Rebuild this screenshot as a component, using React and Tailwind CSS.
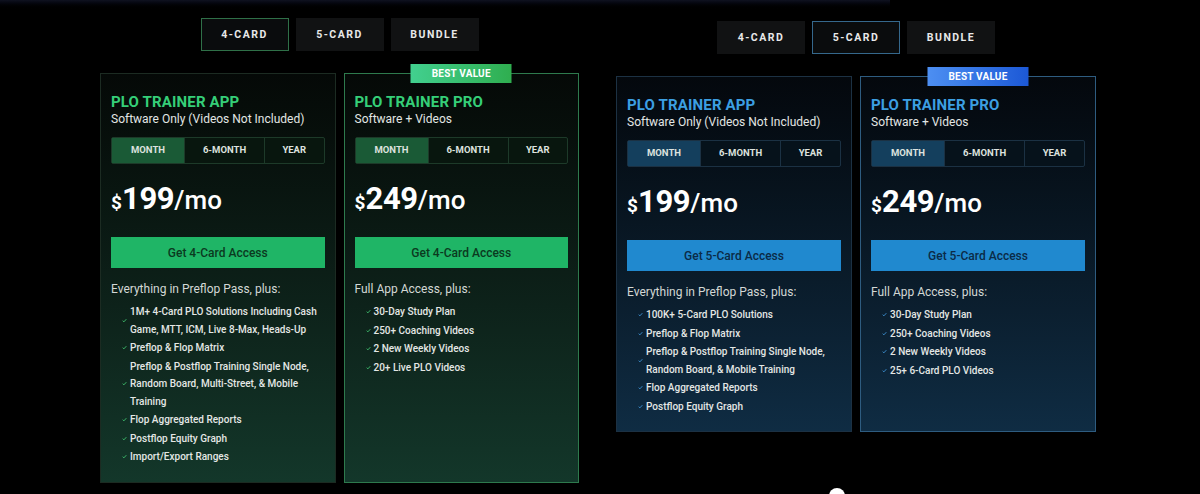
import React from "react";

const themes = {
  green: {
    tabActive: "border-[#2f7048]",
    title: "text-[#35cf78]",
    toggleWrap: "border-[#1d3a29] bg-[#08160e]",
    toggleActive: "bg-[#1a5a36]",
    toggleLine: "border-[#1d3a29]",
    button: "bg-[#1fb566] text-[#0b3a1f]",
    check: "#3fbf6f",
    card: "from-[#050907] to-[#13372a]",
    cardBorder: "border-[#1c2b22]",
    proBorder: "border-[#2e7a4d]",
    badge: "from-[#42d08f] to-[#2fae4f]",
    cta: "Get 4-Card Access",
    appFeatures: [
      "1M+ 4-Card PLO Solutions Including Cash Game, MTT, ICM, Live 8-Max, Heads-Up",
      "Preflop & Flop Matrix",
      "Preflop & Postflop Training Single Node, Random Board, Multi-Street, & Mobile Training",
      "Flop Aggregated Reports",
      "Postflop Equity Graph",
      "Import/Export Ranges",
    ],
    proFeatures: ["30-Day Study Plan", "250+ Coaching Videos", "2 New Weekly Videos", "20+ Live PLO Videos"],
    active: 0,
  },
  blue: {
    tabActive: "border-[#35688c]",
    title: "text-[#3c9fe2]",
    toggleWrap: "border-[#1b3143] bg-[#06121b]",
    toggleActive: "bg-[#143f5d]",
    toggleLine: "border-[#1b3143]",
    button: "bg-[#2089cf] text-[#0b2b47]",
    check: "#3d90d2",
    card: "from-[#04080d] to-[#0f2c43]",
    cardBorder: "border-[#1c3143]",
    proBorder: "border-[#2e5c80]",
    badge: "from-[#4d8ff2] to-[#1c58d6]",
    cta: "Get 5-Card Access",
    appFeatures: [
      "100K+ 5-Card PLO Solutions",
      "Preflop & Flop Matrix",
      "Preflop & Postflop Training Single Node, Random Board, & Mobile Training",
      "Flop Aggregated Reports",
      "Postflop Equity Graph",
    ],
    proFeatures: ["30-Day Study Plan", "250+ Coaching Videos", "2 New Weekly Videos", "25+ 6-Card PLO Videos"],
    active: 1,
  },
};

function Check({ color }) {
  return (
    <svg width="5" height="5" viewBox="0 0 6 6" className="shrink-0">
      <path d="M0.8 3.2 L2.3 4.6 L5.2 1.4" fill="none" stroke={color} strokeWidth="1.1" />
    </svg>
  );
}

function PlanCard({ t, pro }) {
  const name = pro ? "PLO TRAINER PRO" : "PLO TRAINER APP";
  const sub = pro ? "Software + Videos" : "Software Only (Videos Not Included)";
  const price = pro ? "249" : "199";
  const heading = pro ? "Full App Access, plus:" : "Everything in Preflop Pass, plus:";
  const features = pro ? t.proFeatures : t.appFeatures;

  return (
    <div className={`relative flex-1 border bg-linear-to-b ${t.card} ${pro ? t.proBorder : t.cardBorder} px-[10px] pt-[19px] pb-[16px]`}>
      {pro && (
        <div className={`absolute left-1/2 -translate-x-1/2 -top-[10px] w-[101px] h-[19px] flex items-center justify-center bg-linear-to-r ${t.badge} text-white text-[10px] font-bold tracking-[0.02em]`}>
          BEST VALUE
        </div>
      )}
      <h3 className={`text-[15px] leading-[18px] font-bold tracking-[0.01em] ${t.title}`}>{name}</h3>
      <p className="text-[12px] leading-[16px] text-[#e2e6e4]">{sub}</p>

      <div className={`mt-[10px] h-[27px] flex border rounded-[2px] ${t.toggleWrap}`}>
        <div className={`w-[72px] flex items-center justify-center text-[9.5px] font-bold text-[#dde2df] ${t.toggleActive}`}>MONTH</div>
        <div className={`w-[80px] flex items-center justify-center text-[9.5px] font-bold text-[#dde2df] border-l ${t.toggleLine}`}>6-MONTH</div>
        <div className={`flex-1 flex items-center justify-center text-[9.5px] font-bold text-[#dde2df] border-l ${t.toggleLine}`}>YEAR</div>
      </div>

      <div className="mt-[17px] h-[36px] flex items-baseline text-white">
        <span className="text-[19px] font-bold">$</span>
        <span className="text-[31px] font-bold leading-[36px] tracking-[-0.01em]">{price}</span>
        <span className="text-[26px] font-medium">/mo</span>
      </div>

      <div className={`mt-[20px] h-[31px] flex items-center justify-center text-[12px] font-medium ${t.button}`}>
        {t.cta}
      </div>

      <p className="mt-[13px] text-[12px] leading-[16px] text-[#d3d8d5]">{heading}</p>

      <ul className="mt-[6px] flex flex-col gap-[1px]">
        {features.map((f) => (
          <li key={f} className="flex items-center gap-[3px] pl-[11px]">
            <Check color={t.check} />
            <span className="text-[10px] leading-[17.5px] font-medium text-[#e4e7e5] max-w-[195px]">{f}</span>
          </li>
        ))}
      </ul>
    </div>
  );
}

function Panel({ theme, className }) {
  const t = themes[theme];
  const tabs = ["4-CARD", "5-CARD", "BUNDLE"];
  return (
    <div className={`flex flex-col items-center ${className}`}>
      <div className="flex gap-[7px]">
        {tabs.map((tab, i) => (
          <div
            key={tab}
            className={`w-[88px] h-[33px] flex items-center justify-center text-[10.5px] font-bold tracking-[0.14em] text-[#e8e8e8] border ${
              i === t.active ? `bg-[#0a0c0d] ${t.tabActive}` : "bg-[#111213] border-transparent"
            }`}
          >
            {tab}
          </div>
        ))}
      </div>
      <div className="mt-[22px] w-full flex items-stretch gap-[8px]">
        <PlanCard t={t} />
        <PlanCard t={t} pro />
      </div>
    </div>
  );
}

export default function App() {
  return (
    <div className="relative w-[1200px] h-[494px] overflow-hidden bg-black flex items-start font-['Roboto','Liberation_Sans',sans-serif]">
      <div className="absolute top-0 left-0 w-[890px] h-[10px] bg-linear-to-b from-[#0f1220] to-black" />
      <Panel theme="green" className="ml-[100px] mt-[18px] w-[479px]" />
      <Panel theme="blue" className="ml-[37px] mt-[21px] w-[480px]" />
      <div className="absolute left-[829px] top-[488px] w-[16px] h-[12px] rounded-t-full bg-white" />
    </div>
  );
}
